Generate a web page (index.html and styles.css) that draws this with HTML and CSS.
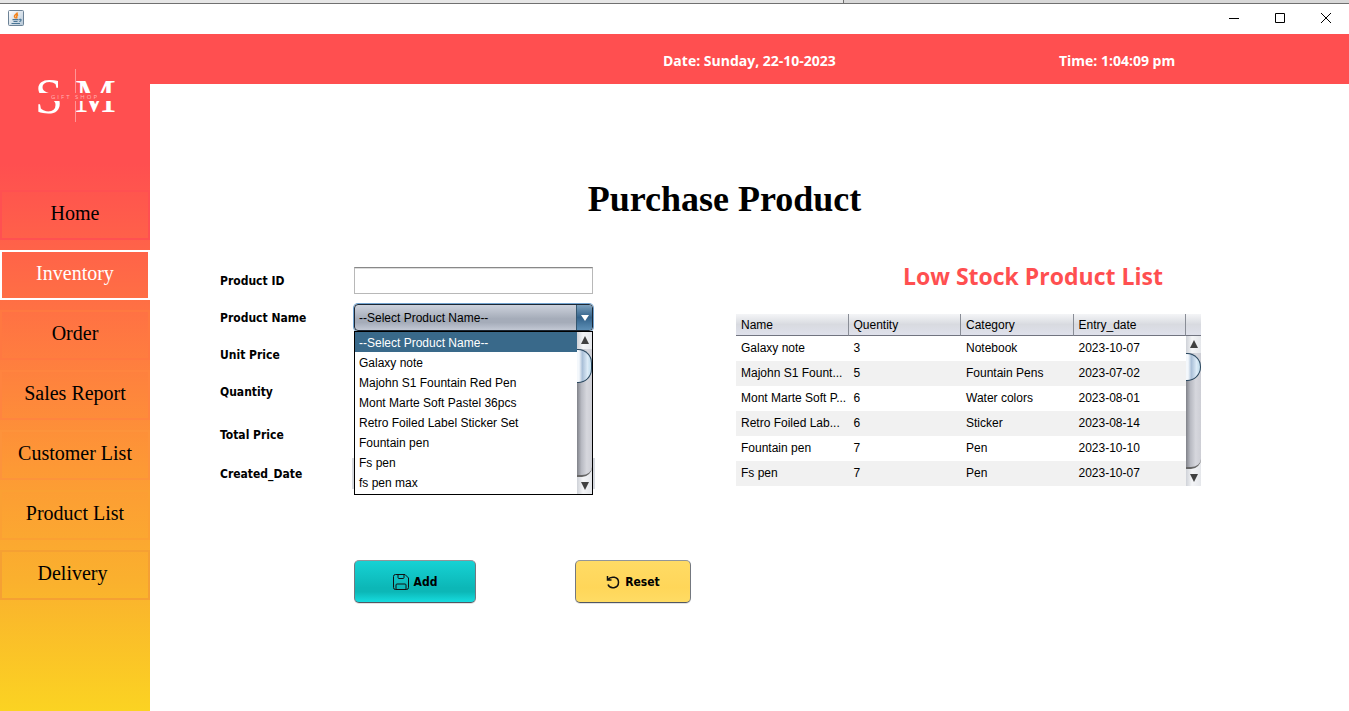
FILE: index.html
```html
<!DOCTYPE html>
<html lang="en">
<head>
<meta charset="utf-8">
<title>Purchase Product</title>
<link rel="stylesheet" href="styles.css">
</head>
<body>
<div class="window">
  <div class="backdrop-edge"><span class="edge-left"></span><span class="edge-right"></span></div>
  <div class="titlebar">
    <svg class="java-icon" viewBox="0 0 16 16" aria-hidden="true">
      <defs><linearGradient id="tile" x1="0" y1="0" x2="1" y2="1"><stop offset="0" stop-color="#fff"/><stop offset="1" stop-color="#b4c6d6"/></linearGradient></defs>
      <rect x="0.5" y="0.5" width="15" height="15" rx="1" fill="url(#tile)" stroke="#6c8296"/>
      <path d="M9.500 2.500C9 4.500 6 4.700 6.500 6.500c.2.9 1 1 1 1.900M10 4.500C7.500 6 9.500 6.500 8.500 8.500" fill="none" stroke="#f58219" stroke-width="1.500"/>
      <path d="M4.500 9.700h6M5.500 11.500h4M3.500 13.500h8.500M11 9.500c3-1 2.500 1.700.3 2" fill="none" stroke="#4a7696" stroke-width="1.200"/>
    </svg>
    <div class="window-controls">
      <button type="button" aria-label="Minimize"><svg viewBox="0 0 12 12"><path d="M1 6.500h10"/></svg></button>
      <button type="button" aria-label="Maximize"><svg viewBox="0 0 12 12"><path d="M1.500 1.500h9v9h-9z"/></svg></button>
      <button type="button" aria-label="Close"><svg viewBox="0 0 12 12"><path d="M1 1l10 10M11 1L1 11"/></svg></button>
    </div>
  </div>
  <div class="app">
    <aside class="sidebar">
      <svg class="logo" viewBox="0 0 90 60" role="img" aria-label="SM Gift Shop">
        <text class="logo-letter" x="5" y="48" font-size="50">S</text>
        <text class="logo-letter" x="45" y="47" font-size="46">M</text>
        <rect x="0" y="28" width="90" height="8" fill="#ff4f50"/>
        <path d="M45.500 4v24M45.500 36v21" stroke="#ff9596" stroke-width="1"/>
        <text class="logo-caption" x="21" y="34">GIFT SHOP</text>
      </svg>
      <nav class="menu">
        <button type="button" class="menu-item home">Home</button>
        <button type="button" class="menu-item active">Inventory</button>
        <button type="button" class="menu-item order">Order</button>
        <button type="button" class="menu-item sales">Sales Report</button>
        <button type="button" class="menu-item customers">Customer List</button>
        <button type="button" class="menu-item products">Product List</button>
        <button type="button" class="menu-item delivery">Delivery</button>
      </nav>
    </aside>
    <div class="page">
      <header class="statusbar">
        <span>Date: Sunday, 22-10-2023</span>
        <span>Time: 1:04:09 pm</span>
      </header>
      <main class="content">
        <h1>Purchase Product</h1>
        <div class="columns">
          <form class="purchase">
            <div class="field"><label for="pid">Product ID</label><input id="pid" type="text"></div>
            <div class="field">
              <label for="pname">Product Name</label>
              <div class="combo">
                <select id="pname"><option>--Select Product Name--</option></select>
                <span class="combo-arrow" aria-hidden="true"><svg viewBox="0 0 8 6"><path d="M0 0h8L4 6z" fill="#fff"/></svg></span>
                <div class="popup">
                  <ul role="listbox" aria-label="Product Name">
                    <li role="option" aria-selected="true" class="selected">--Select Product Name--</li>
                    <li role="option">Galaxy note</li>
                    <li role="option">Majohn S1 Fountain Red Pen</li>
                    <li role="option">Mont Marte Soft Pastel 36pcs</li>
                    <li role="option">Retro Foiled Label Sticker Set</li>
                    <li role="option">Fountain pen</li>
                    <li role="option">Fs pen</li>
                    <li role="option">fs pen max</li>
                  </ul>
                  <div class="scrollbar" aria-hidden="true">
                    <svg class="arrow" viewBox="0 0 15 17"><path d="M4 12h8L8 4z"/></svg>
                    <span class="track"><span class="thumb"></span></span>
                    <svg class="arrow" viewBox="0 0 15 17"><path d="M4 5h8L8 13z"/></svg>
                  </div>
                </div>
              </div>
            </div>
            <div class="field"><label for="price">Unit Price</label><input id="price" type="text"></div>
            <div class="field"><label for="qty">Quantity</label><input id="qty" type="text"></div>
            <div class="field total"><label for="total">Total Price</label><input id="total" type="text"></div>
            <div class="field"><label for="created">Created_Date</label><input id="created" class="date" type="text"></div>
            <div class="actions">
              <button type="button" class="add">
                <svg viewBox="0 0 16 16" aria-hidden="true"><path d="M2.500.5h9.500l3.500 3.500v9.500a2 2 0 0 1-2 2h-11a2 2 0 0 1-2-2v-11a2 2 0 0 1 2-2zM5 .5v3a1 1 0 0 0 1 1h4a1 1 0 0 0 1-1v-3M3 15.500v-4.500a1 1 0 0 1 1-1h8a1 1 0 0 1 1 1v4.500"/></svg>Add</button>
              <button type="button" class="reset">
                <svg viewBox="0 0 14 14" aria-hidden="true"><path d="M1.500 1v4h4M1.700 4.700C5 .7 12.500 1.500 12.500 7.300c0 6.300-8.500 7.200-10.500 2.200"/></svg>Reset</button>
            </div>
          </form>
          <section class="stock">
            <h2>Low Stock Product List</h2>
            <div class="table-pane">
              <table>
                <thead><tr><th>Name</th><th>Quentity</th><th>Category</th><th>Entry_date</th></tr></thead>
                <tbody>
                  <tr><td>Galaxy note</td><td>3</td><td>Notebook</td><td>2023-10-07</td></tr>
                  <tr><td>Majohn S1 Fount...</td><td>5</td><td>Fountain Pens</td><td>2023-07-02</td></tr>
                  <tr><td>Mont Marte Soft P...</td><td>6</td><td>Water colors</td><td>2023-08-01</td></tr>
                  <tr><td>Retro Foiled Lab...</td><td>6</td><td>Sticker</td><td>2023-08-14</td></tr>
                  <tr><td>Fountain pen</td><td>7</td><td>Pen</td><td>2023-10-10</td></tr>
                  <tr><td>Fs pen</td><td>7</td><td>Pen</td><td>2023-10-07</td></tr>
                </tbody>
              </table>
              <div class="scroll-side" aria-hidden="true">
                <span class="corner"></span>
                <div class="scrollbar">
                  <svg class="arrow" viewBox="0 0 15 17"><path d="M4 12h8L8 4z"/></svg>
                  <span class="track"><span class="thumb short"></span></span>
                  <svg class="arrow" viewBox="0 0 15 17"><path d="M4 5h8L8 13z"/></svg>
                </div>
              </div>
            </div>
          </section>
        </div>
      </main>
    </div>
  </div>
</div>
</body>
</html>
```
FILE: styles.css
```css
* { box-sizing: border-box; }
body { margin: 0; background: #fff; color: #000; font: 12px/20px "Liberation Sans", Arial, sans-serif; }
button { font: inherit; cursor: pointer; }
h1, h2, ul { margin: 0; padding: 0; }

.window { min-height: 100vh; display: flex; flex-direction: column; }
.backdrop-edge { display: flex; height: 4px; border-bottom: 1px solid #707070; background: #e6e6e6; }
.edge-left { flex: 5; border-right: 1px solid #707070; }
.edge-right { flex: 3; background: #d8d8d8; }
.titlebar { height: 30px; padding: 0 0 2px 8px; display: flex; align-items: center; justify-content: space-between; }
.java-icon { width: 16px; height: 16px; }
.window-controls { display: flex; }
.window-controls button { width: 46px; height: 28px; padding: 0; border: 0; background: none; display: grid; place-items: center; }
.window-controls svg { width: 12px; height: 12px; fill: none; stroke: #000; }

.app { flex: 1; display: flex; }
.sidebar { width: 150px; flex: none; background: linear-gradient(#ff4f50 0, #ff4f50 130px, #ff7044 272px, #fd9935 435px, #fab02e 545px, #fbd322 100%); }
.logo { display: block; width: 90px; height: 60px; margin: 31px 0 65px 30px; }
.logo-letter { font-family: "Liberation Serif", serif; fill: #fff; }
.logo-caption { font: 6px "Open Sans", sans-serif; letter-spacing: 2px; fill: #ffb4b4; }
.menu { display: flex; flex-direction: column; gap: 10px; }
.menu-item { height: 50px; padding: 0 0 3px; border: 2px solid; background: none; font: 20px "Liberation Serif", "Times New Roman", serif; }
.home { border-color: #ff5051; }
.active { border-color: #fff; color: #fff; }
.order { border-color: #ff7841; }
.sales { border-color: #ff843f; }
.customers { border-color: #fd933b; }
.products { border-color: #fba033; }
.delivery { border-color: #f5a033; padding-right: 5px; }

.page { flex: 1; min-width: 0; }
.statusbar { height: 50px; padding: 2px 0 0 513px; display: flex; align-items: center; gap: 223px; background: #ff4f50; color: #fff; font: bold 14px "Open Sans", "Segoe UI", sans-serif; white-space: nowrap; }
.content { padding: 94px 50px 40px 70px; }
h1 { margin-right: 70px; text-align: center; font: bold 36px/42px "Liberation Serif", "Times New Roman", serif; }
.columns { display: flex; gap: 45px; padding-top: 47px; }

.purchase { flex: 0 0 471px; display: flex; flex-direction: column; gap: 10px; }
.field { display: grid; grid-template-columns: 134px 239px; height: 27px; align-items: center; }
.field label { font: bold 12px "DejaVu Sans Condensed", Tahoma, sans-serif; }
.field input { width: 100%; height: 27px; padding: 0 5px; border: 1px solid #b8b8b8; border-top-color: #888; background: #fff; box-shadow: inset 0 1px #ddd; font: inherit; }
.total { margin-top: 6px; }
.field .date { justify-self: center; width: 243px; height: 31px; border: 2px solid #d6d9df; }
.combo { position: relative; height: 27px; }
.combo select { appearance: none; display: block; width: 100%; height: 27px; padding: 0 20px 0 4px; border: 1px solid #1c2733; border-radius: 4px; background: linear-gradient(#cdd2dc, #a5acb9 55%, #a5acb9 70%, #c2c8d4); box-shadow: 0 0 0 1px #73a4d1; color: #000; font: inherit; }
.combo-arrow { position: absolute; top: 1px; right: 1px; width: 16px; height: 25px; display: grid; place-items: center; border-radius: 0 3px 3px 0; border-left: 1px solid #34566f; background: linear-gradient(#7ba0bd, #33628a 50%, #5d8fb6); pointer-events: none; }
.combo-arrow svg { width: 8px; height: 6px; }
.popup { position: absolute; z-index: 2; top: 27px; left: 0; right: 0; display: flex; border: 1px solid #000; background: #fff; }
.popup ul { flex: 1; list-style: none; padding-bottom: 2px; }
.popup li { height: 20px; padding-left: 4px; white-space: nowrap; line-height: 22px; }
.popup .selected { background: #39698a; color: #fff; }

.scrollbar { width: 15px; display: flex; flex-direction: column; background: linear-gradient(90deg, #cfd2d8, #f4f5f7 40%, #e5e7eb); }
.arrow { display: block; width: 15px; height: 17px; fill: #404040; }
.track { flex: 1; display: block; overflow: hidden; border-bottom: 2px solid #666; border-radius: 0 0 10px 0; background: linear-gradient(90deg, #808289, #b8bac2 30%, #d6d7dd 65%, #cdced5); }
.thumb { display: block; height: 34px; border: 1px solid #29475f; border-left: 0; border-radius: 0 14px 14px 0; background: linear-gradient(90deg, #f4f8fc 15%, #a9bfd7 38%, #dcebf7 75%, #c0dcec); }
.thumb.short { height: 28px; }

.actions { display: flex; gap: 99px; margin: 65px 0 0 134px; }
.actions button { height: 43px; padding: 0; display: flex; align-items: center; justify-content: center; gap: 5px; border: 1px solid; border-color: #92969a #74787f #515762; border-radius: 5px; font: bold 12px "DejaVu Sans Condensed", Tahoma, sans-serif; color: #000; box-shadow: 0 1px #e2e2e2; }
.actions svg { fill: none; stroke: #111; }
.add { width: 122px; background: linear-gradient(#16d2d4, #0cb7b7 65%, #0cb7b7 75%, #16dcdf); }
.add svg { width: 16px; height: 16px; }
.reset { width: 116px; background: linear-gradient(#ffdb65, #ffd659 65%, #ffdc64); }
.reset svg { width: 14px; height: 14px; stroke-width: 1.5; }

.stock { flex: 1; min-width: 465px; max-width: 465px; }
h2 { margin: -5px 0 24px; padding-left: 167px; color: #ff4f50; font: bold 23px/28px "Open Sans", "Segoe UI", sans-serif; white-space: nowrap; }
.table-pane { display: flex; }
table { flex: 1; width: 100%; border-collapse: separate; border-spacing: 0; table-layout: fixed; }
th, td { padding: 0 0 0 5px; text-align: left; font-weight: normal; white-space: nowrap; }
th { height: 22px; border-right: 1px solid #898d96; border-bottom: 1px solid #717480; background: linear-gradient(#f4f5f7, #d8dae0 50%, #dfe1eb); line-height: 20px; }
td { height: 25px; line-height: 25px; }
tbody tr:nth-child(even) { background: #f1f1f1; }
.scroll-side { flex: none; width: 15px; display: flex; flex-direction: column; }
.corner { height: 22px; border-bottom: 1px solid #717480; background: linear-gradient(#f4f5f7, #d8dae0 50%, #dfe1eb); }
.scroll-side .scrollbar { flex: 1; }
```
